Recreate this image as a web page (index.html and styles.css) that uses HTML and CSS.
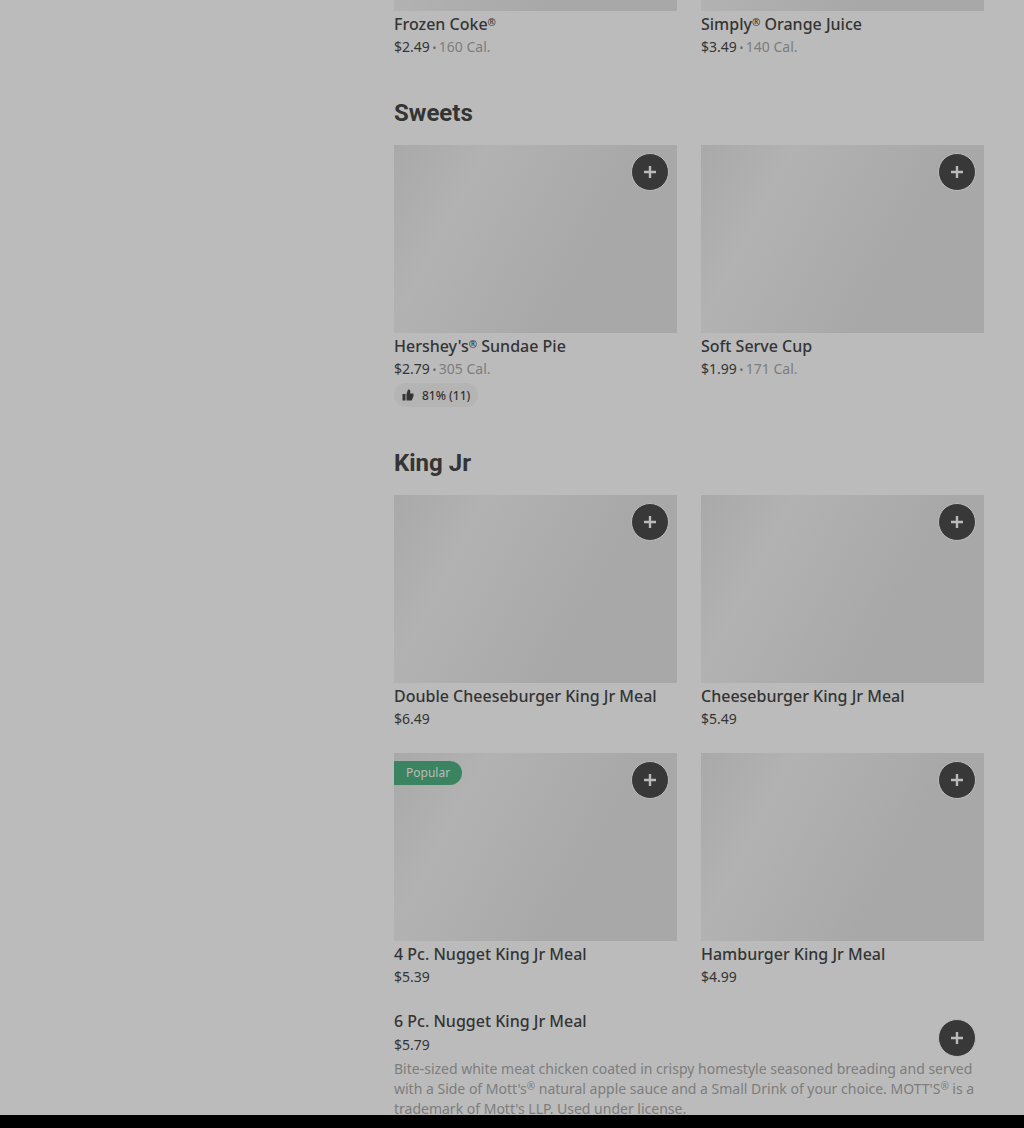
FILE: index.html
```
<!DOCTYPE html>
<html lang="en">
<head>
    <meta charset="UTF-8">
    <meta name="viewport" content="width=device-width, initial-scale=1.0">
    <title>Menu</title>
    <link rel="stylesheet" href="styles.css">
</head>
<body>
    <!-- Shared icons -->
    <svg class="icon-defs" aria-hidden="true">
        <symbol id="icon-plus" viewBox="0 0 12 12">
            <path d="M4.8 0h2.4v4.8H12v2.4H7.2V12H4.8V7.2H0V4.8h4.8z"/>
        </symbol>
        <symbol id="icon-thumb" viewBox="0 0 24 24">
            <path d="M1 10h6v13H1zM9 10l3-9h1c2 0 3.500 1 3.500 3v5H23v5l-3.500 9H9z"/>
        </symbol>
    </svg>

    <div class="page">
        <aside class="sidebar"></aside>
        <main class="menu">
            <!-- Drinks, scrolled mostly out of view -->
            <section class="section section-scrolled">
                <ul class="items">
                    <li class="card">
                        <div class="card-image"></div>
                        <h3>Frozen Coke<span class="reg">®</span></h3>
                        <p class="price">$2.49<span class="dot"> • </span><span class="calories">160 Cal.</span></p>
                    </li>
                    <li class="card">
                        <div class="card-image"></div>
                        <h3>Simply<span class="reg">®</span> Orange Juice</h3>
                        <p class="price">$3.49<span class="dot"> • </span><span class="calories">140 Cal.</span></p>
                    </li>
                </ul>
            </section>

            <!-- Sweets -->
            <section class="section">
                <h2>Sweets</h2>
                <ul class="items">
                    <li class="card">
                        <div class="card-image"></div>
                        <button class="add" aria-label="Add"><svg><use href="#icon-plus"/></svg></button>
                        <h3>Hershey's<span class="reg">®</span> Sundae Pie</h3>
                        <p class="price">$2.79<span class="dot"> • </span><span class="calories">305 Cal.</span></p>
                        <div class="rating"><svg><use href="#icon-thumb"/></svg>81% (11)</div>
                    </li>
                    <li class="card">
                        <div class="card-image"></div>
                        <button class="add" aria-label="Add"><svg><use href="#icon-plus"/></svg></button>
                        <h3>Soft Serve Cup</h3>
                        <p class="price">$1.99<span class="dot"> • </span><span class="calories">171 Cal.</span></p>
                    </li>
                </ul>
            </section>

            <!-- King Jr -->
            <section class="section">
                <h2>King Jr</h2>
                <ul class="items">
                    <li class="card">
                        <div class="card-image"></div>
                        <button class="add" aria-label="Add"><svg><use href="#icon-plus"/></svg></button>
                        <h3>Double Cheeseburger King Jr Meal</h3>
                        <p class="price">$6.49</p>
                    </li>
                    <li class="card">
                        <div class="card-image"></div>
                        <button class="add" aria-label="Add"><svg><use href="#icon-plus"/></svg></button>
                        <h3>Cheeseburger King Jr Meal</h3>
                        <p class="price">$5.49</p>
                    </li>
                    <li class="card">
                        <div class="card-image"></div>
                        <span class="popular">Popular</span>
                        <button class="add" aria-label="Add"><svg><use href="#icon-plus"/></svg></button>
                        <h3>4 Pc. Nugget King Jr Meal</h3>
                        <p class="price">$5.39</p>
                    </li>
                    <li class="card">
                        <div class="card-image"></div>
                        <button class="add" aria-label="Add"><svg><use href="#icon-plus"/></svg></button>
                        <h3>Hamburger King Jr Meal</h3>
                        <p class="price">$4.99</p>
                    </li>
                    <li class="card card-wide">
                        <button class="add" aria-label="Add"><svg><use href="#icon-plus"/></svg></button>
                        <h3>6 Pc. Nugget King Jr Meal</h3>
                        <p class="price">$5.79</p>
                        <p class="description">Bite-sized white meat chicken coated in crispy homestyle seasoned breading and served with a Side of Mott's<span class="reg">®</span> natural apple sauce and a Small Drink of your choice. MOTT'S<span class="reg">®</span> is a trademark of Mott's LLP. Used under license.</p>
                    </li>
                </ul>
            </section>
        </main>
    </div>
    <footer class="bottom-bar"></footer>
</body>
</html>
```
FILE: styles.css
```
/* Global Styles */
* {
    margin: 0;
    padding: 0;
    box-sizing: border-box;
}

body {
    display: flex;
    flex-direction: column;
    height: 100vh;
    overflow: hidden;
    font-family: "Noto Sans", sans-serif;
    background-color: #bbb;
    color: #343434;
}

.icon-defs {
    position: absolute;
    width: 0;
    height: 0;
}

/* Page */
.page {
    display: flex;
    flex: 1;
    min-height: 0;
    overflow: hidden;
}

.sidebar {
    flex: 0 0 354px;
}

.menu {
    flex: 1;
    min-width: 0;
    padding: 0 40px;
}

.bottom-bar {
    flex: 0 0 13px;
    background-color: #000;
}

/* Sections */
.section {
    margin-bottom: 40px;
}

.section-scrolled {
    margin-top: -177px;
}

.section h2 {
    margin-bottom: 16px;
    font-family: Roboto, sans-serif;
    font-size: 24px;
    font-weight: 700;
    line-height: 32px;
}

.items {
    display: grid;
    grid-template-columns: 1fr 1fr;
    gap: 24px;
    list-style: none;
}

/* Cards */
.card {
    position: relative;
}

.card-image {
    aspect-ratio: 283 / 188;
    background: linear-gradient(118deg, #a9a9a9 0%, #b2b2b2 25%, #a8a8a8 66%);
}

.card h3 {
    font-size: 16px;
    font-weight: 500;
    line-height: 26px;
}

.reg {
    font-size: 10px;
    line-height: 1;
    vertical-align: 4px;
}

.price {
    font-size: 14px;
    line-height: 20px;
}

.dot {
    font-size: 10px;
    line-height: 1;
    color: #666;
}

.calories,
.description {
    color: #7d7d7d;
}

.description {
    font-size: 14px;
    line-height: 20px;
}

.rating {
    display: inline-flex;
    align-items: center;
    gap: 8px;
    height: 24px;
    margin-top: 4px;
    padding: 0 8px;
    border-radius: 12px;
    background-color: #b4b4b4;
    font-size: 12px;
    font-weight: 500;
    vertical-align: top;
}

.rating svg {
    width: 12px;
    height: 12px;
    fill: #343434;
}

.popular {
    position: absolute;
    top: 8px;
    left: 0;
    padding: 0 12px;
    border-radius: 0 12px 12px 0;
    background-color: #3b8461;
    color: #bbb;
    font-size: 12px;
    line-height: 24px;
}

/* Add Button */
.add {
    position: absolute;
    top: 8px;
    right: 8px;
    display: flex;
    align-items: center;
    justify-content: center;
    width: 38px;
    height: 38px;
    border: 1px solid #bbb;
    border-radius: 50%;
    background-color: #383838;
    cursor: pointer;
}

.add svg {
    width: 12px;
    height: 12px;
    fill: #bbb;
}

/* Card without a picture */
.card-wide {
    grid-column: 1 / -1;
}

.card-wide h3 {
    line-height: 20px;
}

.card-wide .price,
.card-wide .description {
    margin-top: 4px;
}
```
